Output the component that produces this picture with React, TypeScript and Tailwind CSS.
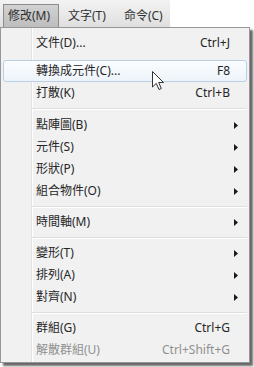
import React from "react";

const font = { fontFamily: '"Noto Sans", "Noto Sans CJK TC", sans-serif' };

function Arrow() {
  return (
    <svg width="4" height="7" viewBox="0 0 4 7" className="ml-[4px]">
      <polygon points="0,0 4,3.5 0,7" fill="#1a1a1a" />
    </svg>
  );
}

function Item({
  label,
  shortcut,
  sub,
  disabled,
  hot,
  className = "",
}: {
  label: string;
  shortcut?: string;
  sub?: boolean;
  disabled?: boolean;
  hot?: boolean;
  className?: string;
}) {
  return (
    <div
      className={
        "mx-[2px] h-[22px] flex items-center border rounded-[3px] pl-[32px] text-[12px] leading-none " +
        (hot
          ? "border-[#b9cfe6] bg-[linear-gradient(to_bottom,#fbfdff,#edf3fa)] "
          : "border-transparent ") +
        (disabled ? "text-[#909090] " : "text-[#262626] ") +
        className
      }
    >
      <span className="flex-1">{label}</span>
      {shortcut && <span>{shortcut}</span>}
      <span className="w-[16px] flex items-center">{sub && <Arrow />}</span>
    </div>
  );
}

function Sep({ className = "" }: { className?: string }) {
  return (
    <div className={"flex flex-col justify-center h-[9px] pl-[31px] pr-[2px] " + className}>
      <div className="h-px bg-[#dedede]" />
      <div className="h-px bg-white" />
    </div>
  );
}

export default function App() {
  return (
    <div className="w-[254px] h-[367px] bg-white relative overflow-hidden" style={font}>
      <div className="h-[27px] w-[170px] bg-[linear-gradient(to_bottom,#f3f3f3,#dfdfdf)] flex items-end text-[12px] text-[#303030]">
        <div className="ml-[3px] h-[23px] w-[56px] border border-[#8c8c8c] border-b-0 bg-[linear-gradient(to_bottom,#d2d2d2,#bdbdbd)] flex items-center pl-[4px]">
          修改(M)
        </div>
        <div className="h-[23px] flex items-center ml-[9px]">文字(T)</div>
        <div className="h-[23px] flex items-center ml-[18px]">命令(C)</div>
      </div>
      <div className="w-[250px] h-[336px] border border-[#979797] shadow-[3px_3px_2px_rgba(0,0,0,0.6)] bg-[linear-gradient(to_right,#f1f1f1_30px,#e2e3e3_30px,#e2e3e3_31px,#ffffff_31px,#ffffff_32px,#f1f1f1_32px)] pt-[4px]">
        <Item label="文件(D)..." shortcut="Ctrl+J" />
        <Item label="轉換成元件(C)..." shortcut="F8" hot className="mt-[6px]" />
        <Item label="打散(K)" shortcut="Ctrl+B" />
        <Sep className="h-[10px]" />
        <Item label="點陣圖(B)" sub />
        <Item label="元件(S)" sub />
        <Item label="形狀(P)" sub />
        <Item label="組合物件(O)" sub />
        <Sep />
        <Item label="時間軸(M)" sub />
        <Sep />
        <Item label="變形(T)" sub />
        <Item label="排列(A)" sub />
        <Item label="對齊(N)" sub />
        <Sep />
        <Item label="群組(G)" shortcut="Ctrl+G" />
        <Item label="解散群組(U)" shortcut="Ctrl+Shift+G" disabled />
      </div>
      <svg
        width="13"
        height="20"
        viewBox="0 0 13 20"
        className="absolute left-[152px] top-[71px]"
      >
        <polygon
          points="0.5,0.5 0.5,16 4.3,12.4 7,18.5 9.3,17.5 6.7,11.5 11.5,11.5"
          fill="white"
          stroke="#333"
          strokeWidth="1"
          strokeLinejoin="round"
        />
      </svg>
    </div>
  );
}
